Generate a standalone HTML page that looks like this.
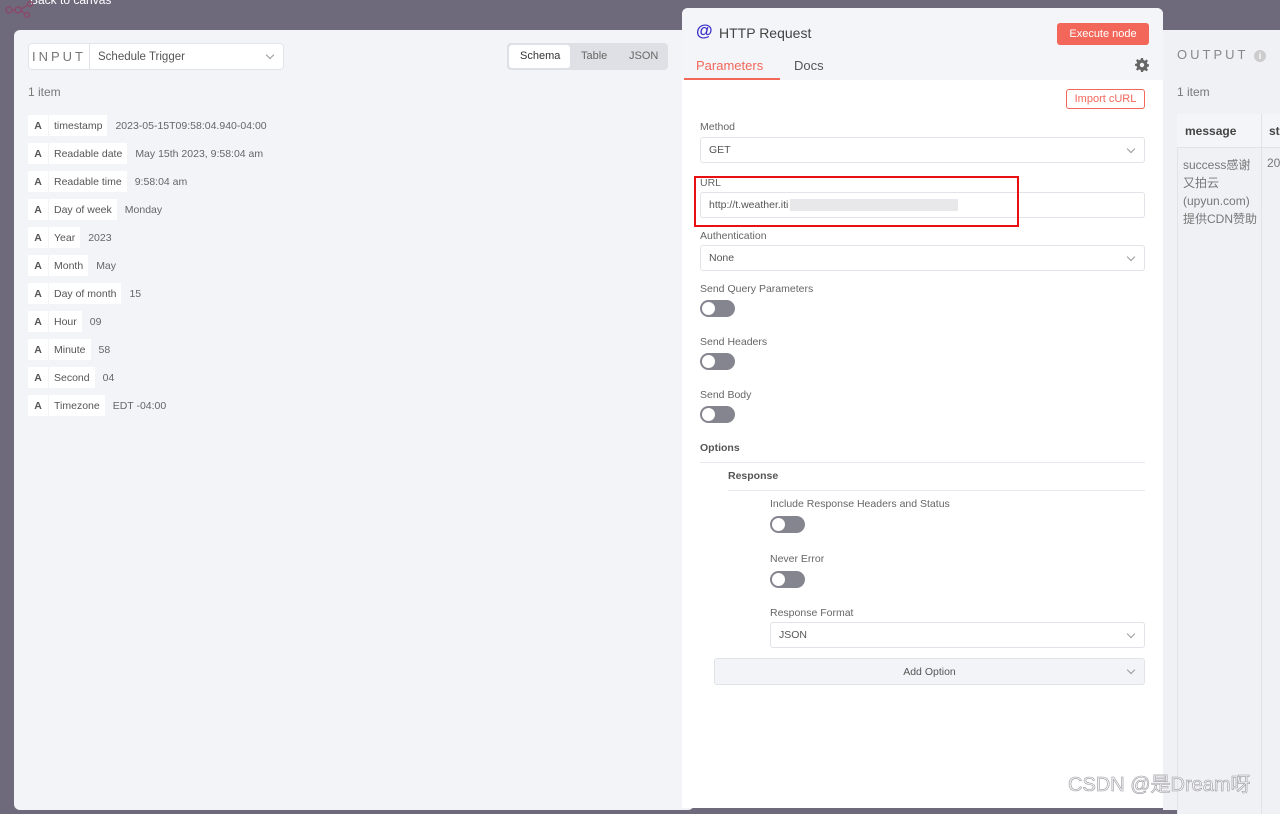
<!DOCTYPE html>
<html><head><meta charset="utf-8"><style>
*{box-sizing:border-box;margin:0;padding:0}
body{width:1280px;height:803px;overflow:hidden;background:#6e6a7c;font-family:"Liberation Sans","Noto Sans CJK SC",sans-serif;position:relative;color:#555}
.abs{position:absolute}
.left{left:14px;top:30px;width:680px;height:780px;background:#f3f4f8;border-radius:6px}
.inp{left:28px;top:43px;width:256px;height:27px;background:#fff;border:1px solid #e3e4ea;border-radius:4px;display:flex;align-items:center;font-size:11.5px}
.inp .l{width:61px;border-right:1px solid #e3e4ea;height:100%;display:flex;align-items:center;justify-content:center;letter-spacing:3px;font-size:13px;color:#777}
.tabs{left:507px;top:43px;width:161px;height:27px;background:#dfe0e6;border-radius:4px;font-size:11px;color:#666}
.tabs span{position:absolute;top:7px}
.row{position:absolute;left:28px;height:21px;font-size:10.5px;display:flex;align-items:center;color:#666}
.row .a{background:#fff;width:20px;height:21px;display:flex;align-items:center;justify-content:center;font-weight:bold;color:#555;margin-right:1px}
.row .k{background:#fff;height:21px;padding:0 5px;display:flex;align-items:center;color:#555;margin-right:8px}
.node{left:682px;top:8px;width:481px;height:800px;background:#fff;border-radius:6px 6px 0 0;overflow:hidden}
.hdr{left:0;top:0;width:481px;height:72px;background:#f4f5f8}
.lab{position:absolute;font-size:10.5px;color:#666}
.sel{position:absolute;height:26px;border:1px solid #e2e3e8;border-radius:3px;background:#fff;font-size:10.5px;color:#555;padding-left:8px;display:flex;align-items:center}
.sel .ch{position:absolute;right:10px;top:8px;width:6px;height:6px;border-right:1px solid #999;border-bottom:1px solid #999;transform:rotate(45deg)}
.tg{position:absolute;width:35px;height:17px;border-radius:9px;background:#858590}
.tg:after{content:"";position:absolute;left:2px;top:2px;width:13px;height:13px;border-radius:50%;background:#fff}
.right{left:1163px;top:30px;width:117px;height:780px;background:#f0f1f5}
</style></head><body>
<div class="abs" style="left:30px;top:-7px;color:#fff;font-size:12px">Back to canvas</div>
<svg class="abs" style="left:4px;top:0" width="32" height="18"><g fill="none" stroke="#8a4a6a" stroke-width="1.5"><circle cx="5" cy="10" r="3"/><circle cx="14" cy="10" r="3"/><circle cx="23" cy="15" r="2.5"/><circle cx="26" cy="4" r="2.5"/><path d="M8 10h3M17 10l4 4M17 9l7-4"/></g></svg>
<div class="abs left"></div>
<div class="abs inp"><div class="l">INPUT</div><span style="margin-left:8px;color:#555">Schedule Trigger</span><span style="position:absolute;right:10px;top:8px;width:6px;height:6px;border-right:1px solid #999;border-bottom:1px solid #999;transform:rotate(45deg)"></span></div>
<div class="abs tabs"><div style="position:absolute;left:2px;top:2px;width:61px;height:23px;background:#fff;border-radius:3px"></div><span style="left:13px;color:#333">Schema</span><span style="left:74px">Table</span><span style="left:122px">JSON</span></div>
<div class="abs" style="left:28px;top:85px;font-size:12px;color:#777">1 item</div>
<div class="row" style="top:115px"><span class="a">A</span><span class="k">timestamp</span>2023-05-15T09:58:04.940-04:00</div>
<div class="row" style="top:143px"><span class="a">A</span><span class="k">Readable date</span>May 15th 2023, 9:58:04 am</div>
<div class="row" style="top:171px"><span class="a">A</span><span class="k">Readable time</span>9:58:04 am</div>
<div class="row" style="top:199px"><span class="a">A</span><span class="k">Day of week</span>Monday</div>
<div class="row" style="top:227px"><span class="a">A</span><span class="k">Year</span>2023</div>
<div class="row" style="top:255px"><span class="a">A</span><span class="k">Month</span>May</div>
<div class="row" style="top:283px"><span class="a">A</span><span class="k">Day of month</span>15</div>
<div class="row" style="top:311px"><span class="a">A</span><span class="k">Hour</span>09</div>
<div class="row" style="top:339px"><span class="a">A</span><span class="k">Minute</span>58</div>
<div class="row" style="top:367px"><span class="a">A</span><span class="k">Second</span>04</div>
<div class="row" style="top:395px"><span class="a">A</span><span class="k">Timezone</span>EDT -04:00</div>

<div class="abs right"></div>
<div class="abs" style="left:1177px;top:47px;font-size:13px;letter-spacing:3px;color:#888">OUTPUT</div>
<div class="abs" style="left:1254px;top:50px;width:12px;height:12px;border-radius:50%;background:#ccc;color:#fff;font-size:9px;font-weight:bold;text-align:center;line-height:12px">i</div>
<div class="abs" style="left:1177px;top:85px;font-size:12px;color:#777">1 item</div>
<div class="abs" style="left:1177px;top:114px;width:103px;height:700px;border-left:1px solid #e2e3e8;background:#f0f1f5"></div>
<div class="abs" style="left:1177px;top:114px;width:103px;height:34px;border-bottom:1px solid #e2e3e8;background:#f4f5f8"></div>
<div class="abs" style="left:1261px;top:114px;width:1px;height:700px;background:#e2e3e8"></div>
<div class="abs" style="left:1185px;top:124px;font-size:12px;font-weight:bold;color:#444">message</div>
<div class="abs" style="left:1269px;top:124px;font-size:12px;font-weight:bold;color:#444">st</div>
<div class="abs" style="left:1183px;top:156px;width:76px;font-size:12px;line-height:18px;color:#777">success感谢又拍云(upyun.com)提供CDN赞助</div>
<div class="abs" style="left:1267px;top:156px;font-size:12px;color:#777">20</div>

<div class="abs node">
<div class="abs hdr"></div>
<div class="abs" style="left:14px;top:13px;font-size:17px;font-weight:bold;color:#3a2fc9">@</div>
<div class="abs" style="left:37px;top:17px;font-size:14px;color:#444">HTTP Request</div>
<div class="abs" style="left:375px;top:15px;width:92px;height:22px;background:#f2675a;border-radius:3px;color:#fff;font-size:11px;display:flex;align-items:center;justify-content:center">Execute node</div>
<div class="abs" style="left:14px;top:50px;font-size:13px;color:#f2675a">Parameters</div>
<div class="abs" style="left:2px;top:70px;width:96px;height:2px;background:#f2675a"></div>
<div class="abs" style="left:112px;top:50px;font-size:13px;color:#555">Docs</div>
<svg class="abs" style="left:453px;top:50px" width="14" height="14" viewBox="0 0 14 14"><path fill="#666" fill-rule="evenodd" d="M6 0h2l.4 2 1.5.7 1.7-1.2 1.4 1.4-1.2 1.7.6 1.4 2 .4v2l-2 .4-.6 1.4 1.2 1.7-1.4 1.4-1.7-1.2-1.5.6L8 14H6l-.4-2-1.5-.6-1.7 1.2-1.4-1.4 1.2-1.7-.6-1.4-2-.4V6l2-.4.6-1.4-1.2-1.7 1.4-1.4 1.7 1.2 1.5-.7zM7 4.8a2.2 2.2 0 1 0 0 4.4 2.2 2.2 0 0 0 0-4.4z"/></svg>
<div class="abs" style="left:384px;top:81px;width:79px;height:20px;border:1px solid #f2675a;border-radius:3px;color:#f2675a;font-size:11px;display:flex;align-items:center;justify-content:center">Import cURL</div>
<div class="lab" style="left:18px;top:113px">Method</div>
<div class="sel" style="left:18px;top:129px;width:445px">GET<span class="ch"></span></div>
<div class="lab" style="left:18px;top:169px">URL</div>
<div class="sel" style="left:18px;top:184px;width:445px">http://t.weather.iti<span style="display:inline-block;width:168px;height:12px;background:#e8e8ea;margin-left:2px"></span></div>
<div class="abs" style="left:12px;top:168px;width:325px;height:51px;border:2px solid #e81010"></div>
<div class="lab" style="left:18px;top:222px">Authentication</div>
<div class="sel" style="left:18px;top:237px;width:445px">None<span class="ch"></span></div>
<div class="lab" style="left:18px;top:275px">Send Query Parameters</div>
<div class="tg" style="left:18px;top:292px"></div>
<div class="lab" style="left:18px;top:328px">Send Headers</div>
<div class="tg" style="left:18px;top:345px"></div>
<div class="lab" style="left:18px;top:381px">Send Body</div>
<div class="tg" style="left:18px;top:398px"></div>
<div class="lab" style="left:18px;top:434px;font-weight:bold;color:#555">Options</div>
<div class="abs" style="left:18px;top:454px;width:445px;height:1px;background:#e8e9ee"></div>
<div class="lab" style="left:46px;top:462px;font-weight:bold;color:#555">Response</div>
<div class="abs" style="left:46px;top:482px;width:417px;height:1px;background:#e8e9ee"></div>
<div class="lab" style="left:88px;top:490px">Include Response Headers and Status</div>
<div class="tg" style="left:88px;top:508px"></div>
<div class="lab" style="left:88px;top:545px">Never Error</div>
<div class="tg" style="left:88px;top:563px"></div>
<div class="lab" style="left:88px;top:599px">Response Format</div>
<div class="sel" style="left:88px;top:614px;width:375px">JSON<span class="ch"></span></div>
<div class="sel" style="left:32px;top:650px;width:431px;height:27px;background:#f3f4f7;justify-content:center;padding:0">Add Option<span class="ch"></span></div>
</div>
<div class="abs" style="left:1068px;top:768px;font-size:20px;color:#f4f4f6;-webkit-text-stroke:0.6px #9a9aa0">CSDN @是Dream呀</div>
</body></html>
